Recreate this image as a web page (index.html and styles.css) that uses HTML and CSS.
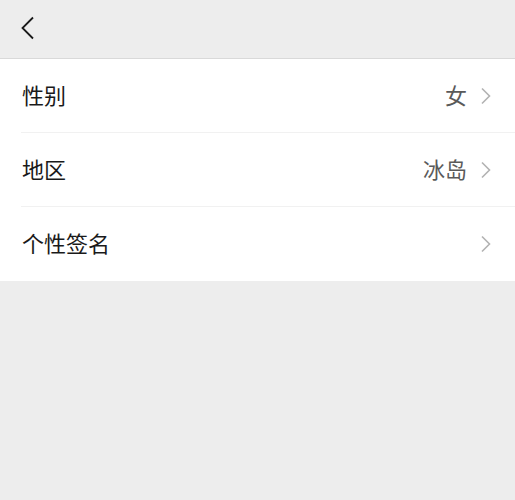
FILE: index.html
```html
<!DOCTYPE html>
<html lang="zh">
<head>
<meta charset="utf-8">
<link rel="stylesheet" href="styles.css">
</head>
<body>
<div class="page">
  <header class="topbar">
    <svg class="back" width="16" height="24" viewBox="0 0 16 24"><path d="M13 1.5 L2.5 12 L13 22.5" fill="none" stroke="#1a1a1a" stroke-width="1.8"/></svg>
  </header>
  <ul class="list">
    <li class="row"><span class="label">性别</span><span class="value">女</span><svg class="chev" width="12" height="18" viewBox="0 0 12 18"><path d="M2 1.5 L9.5 9 L2 16.5" fill="none" stroke="#b2b2b2" stroke-width="1.6"/></svg></li>
    <li class="row"><span class="label">地区</span><span class="value">冰岛</span><svg class="chev" width="12" height="18" viewBox="0 0 12 18"><path d="M2 1.5 L9.5 9 L2 16.5" fill="none" stroke="#b2b2b2" stroke-width="1.6"/></svg></li>
    <li class="row"><span class="label">个性签名</span><span class="value"></span><svg class="chev" width="12" height="18" viewBox="0 0 12 18"><path d="M2 1.5 L9.5 9 L2 16.5" fill="none" stroke="#b2b2b2" stroke-width="1.6"/></svg></li>
  </ul>
</div>
</body>
</html>
```
FILE: styles.css
```css
html, body {
  margin: 0;
  padding: 0;
  background: #ededed;
  font-family: "Noto Sans CJK SC", "Noto Sans", sans-serif;
}
.page {
  width: 515px;
  height: 500px;
  background: #ededed;
}
.topbar {
  height: 59px;
  border-bottom: 1px solid #d9d9d9;
  display: flex;
  align-items: center;
  padding-left: 20px;
  box-sizing: border-box;
}
.back {
  display: block;
  margin-top: -3px;
}
.list {
  list-style: none;
  margin: 0;
  padding: 0 0 0 21px;
  background: #fff;
}
.row {
  height: 74px;
  box-sizing: border-box;
  display: flex;
  align-items: center;
  padding-right: 23px;
  border-bottom: 1px solid #f1f1f1;
}
.row:last-child {
  border-bottom: none;
}
.label {
  flex: 1;
  font-size: 22px;
  line-height: 30px;
  color: #1a1a1a;
  padding-left: 1px;
  margin-top: -4px;
}
.value {
  font-size: 22px;
  line-height: 30px;
  color: #5a5a5a;
  margin-right: 13px;
  margin-top: -4px;
}
.chev {
  display: block;
}
```
